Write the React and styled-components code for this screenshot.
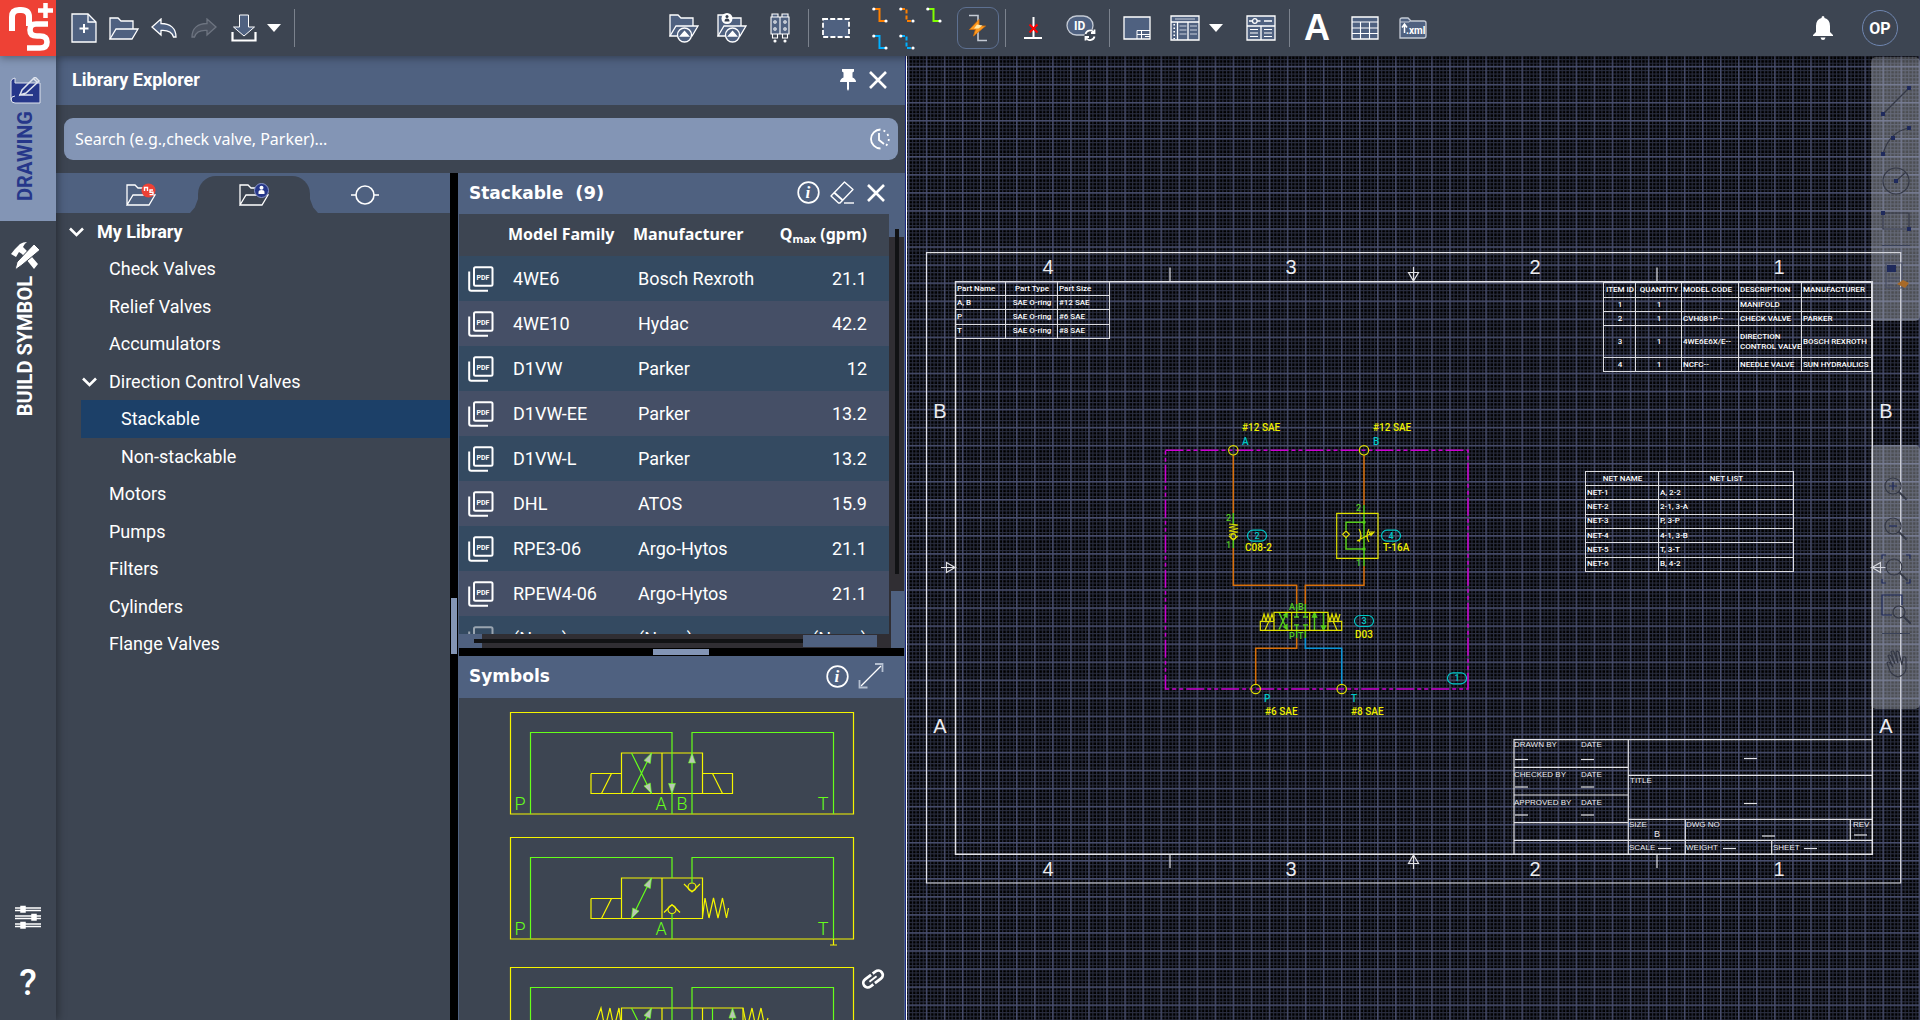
import React from 'react';
import styled, { createGlobalStyle, css } from 'styled-components';

const c = {
  base: '#3d4552',
  head: '#4f6180',
  soft: '#8395b5',
  navy: '#26378a',
  pick: '#1c4068',
  rowA: '#344a61',
  rowB: '#454f66',
  track: '#302e33',
  yellow: '#f5f500',
  green: '#66ff1a',
  cyan: '#00c8c8',
  orange: '#d9700a',
};

const GlobalStyle = createGlobalStyle`
  * { box-sizing: border-box; }
  body { margin: 0; overflow: hidden; background: ${c.base}; color: #fff; font-family: Roboto, "Liberation Sans", sans-serif; font-size: 18px; }
  button, input { font: inherit; color: inherit; }
  svg { display: block; }
`;

const bare = css`
  border: 0;
  padding: 0;
  background: none;
  cursor: pointer;
  display: flex;
  align-items: center;
  justify-content: center;
`;

const Shell = styled.div`
  display: flex;
  flex-direction: column;
  height: 100vh;
`;

/* ---------- top bar ---------- */
const TopBar = styled.header`
  flex: none;
  display: flex;
  height: 56px;
  background: ${c.base};
  position: relative;
  z-index: 3;
  box-shadow: 0 2px 8px rgba(0, 0, 0, 0.35);
`;
const Logo = styled.a`
  display: block;
  width: 56px;
  height: 56px;
  background: #ee4135;
`;
const Groups = styled.div`
  flex: 1;
  display: flex;
  justify-content: space-between;
  align-items: center;
  padding: 0 22px 0 8px;
`;
const Group = styled.div`
  display: flex;
  align-items: center;
`;
const Tool = styled.button`
  ${bare}
  width: ${(p) => p.$w || 48}px;
  height: 42px;
`;
const Caret = styled(Tool)`
  justify-content: ${(p) => (p.$start ? 'flex-start' : 'center')};
`;
const AutoButton = styled.button`
  ${bare}
  width: 42px;
  height: 42px;
  margin-right: 2px;
  border: 1px solid #5d7091;
  border-radius: 9px;
`;
const Separator = styled.span`
  width: 8px;
  height: 38px;
  margin-left: ${(p) => p.$gap || 0}px;
  background: linear-gradient(#7b828d, #7b828d) center / 1px 100% no-repeat;
`;
const Connectors = styled.div`
  display: grid;
  grid-template-columns: repeat(3, 27px);
  grid-auto-rows: 27px;
  align-items: center;
  margin: 0 10px 0 6px;
`;
const LineTool = styled.button`
  ${bare}
  width: 27px;
  height: 27px;
`;
const Avatar = styled.button`
  ${bare}
  width: 36px;
  height: 36px;
  margin-left: 15px;
  border: 1px solid #6f86b0;
  border-radius: 50%;
  font-size: 16px;
  font-weight: 700;
`;

/* ---------- rail ---------- */
const Body = styled.div`
  flex: 1;
  min-height: 0;
  display: flex;
`;
const Rail = styled.nav`
  flex: none;
  width: 56px;
  display: flex;
  flex-direction: column;
  align-items: stretch;
  position: relative;
  z-index: 2;
  background: ${c.base};
  box-shadow: 2px 0 8px rgba(0, 0, 0, 0.35);
`;
const RailTab = styled.button`
  ${bare}
  flex-direction: column;
  justify-content: flex-start;
  gap: 6px;
  padding: 21px 6px 0 0;
  height: ${(p) => (p.$active ? 165 : 200)}px;
  background: ${(p) => (p.$active ? c.soft : 'none')};
  color: ${(p) => (p.$active ? c.navy : '#fff')};
`;
const RailLabel = styled.span`
  writing-mode: vertical-rl;
  transform: rotate(180deg);
  font-size: 20px;
  line-height: 24px;
  font-weight: 700;
`;
const RailFoot = styled.div`
  margin-top: auto;
  display: flex;
  flex-direction: column;
  align-items: center;
  gap: 28px;
  padding-bottom: 18px;
`;
const FootButton = styled.button`
  ${bare}
  width: 40px;
  height: 38px;
  font-size: 36px;
  line-height: 38px;
  font-weight: 500;
`;

/* ---------- library panel ---------- */
const Panel = styled.section`
  flex: 0 0 849px;
  display: flex;
  flex-direction: column;
  min-height: 0;
`;
const PanelHead = styled.header`
  flex: none;
  height: 49px;
  padding: 0 14px 2px 16px;
  display: flex;
  align-items: center;
  gap: 4px;
  background: ${c.head};
`;
const PanelTitle = styled.h1`
  flex: 1;
  margin: 0;
  font-size: 18px;
  line-height: 20px;
  font-weight: 700;
`;
const IconButton = styled.button`
  ${bare}
  width: 26px;
  height: 30px;
`;
const SearchBox = styled.div`
  flex: none;
  display: flex;
  align-items: center;
  height: 42px;
  margin: 13px 7px 13px 8px;
  padding: 0 5px 0 11px;
  border-radius: 9px;
  background: ${c.soft};
`;
const SearchInput = styled.input`
  flex: 1;
  border: 0;
  outline: 0;
  padding: 0;
  background: none;
  font: 16px/24px "Noto Sans", "Open Sans", sans-serif;
  &::placeholder { color: #fff; opacity: 1; }
`;
const Columns = styled.div`
  flex: 1;
  min-height: 0;
  display: flex;
`;
const TreeSide = styled.div`
  flex: 0 0 394px;
  display: flex;
  flex-direction: column;
`;
const Tabs = styled.div`
  flex: none;
  height: 40px;
  display: grid;
  grid-template-columns: 135px 125px 1fr;
  align-items: end;
  background: ${c.head};
`;
const Tab = styled.button`
  ${bare}
  position: relative;
  height: 37px;
  padding: ${(p) => p.$pad || '0'};
  ${(p) => p.$active && css`
    width: 112px;
    margin-left: 7px;
    border-radius: 18px 18px 0 0;
    background: ${c.base};
    &::before, &::after {
      content: '';
      position: absolute;
      bottom: 0;
      width: 8px;
      height: 14px;
      background: ${c.base};
    }
    &::before { right: 100%; clip-path: polygon(100% 0, 100% 100%, 0 100%, 60% 60%); }
    &::after { left: 100%; clip-path: polygon(0 0, 0 100%, 100% 100%, 40% 60%); }
  `}
`;
const Tree = styled.ul`
  margin: 0;
  padding: 0;
  list-style: none;
`;
const TreeItem = styled.li`
  height: 37px;
  padding-left: ${(p) => [12, 25, 25, 25][p.$level]}px;
  &:nth-child(even) { height: 38px; }
`;
const TreeButton = styled.button`
  ${bare}
  justify-content: flex-start;
  width: 100%;
  height: 100%;
  padding-left: ${(p) => [1, 28, 1, 40][p.$level]}px;
  gap: ${(p) => (p.$level ? 12 : 13)}px;
  background: ${(p) => (p.$picked ? c.pick : 'none')};
  line-height: 20px;
  font-weight: ${(p) => (p.$level ? 400 : 700)};
`;
const VSplit = styled.div`
  flex: 0 0 8px;
  display: flex;
  justify-content: center;
  padding-top: 425px;
  background: #000;
  &::after { content: ''; width: 6px; height: 56px; background: ${c.soft}; }
`;
const Detail = styled.div`
  flex: 1;
  min-width: 0;
  display: flex;
  flex-direction: column;
  border: solid ${c.head};
  border-width: 0 1px;
`;
const Results = styled.section`
  flex: 0 0 475px;
  min-height: 0;
  display: flex;
  flex-direction: column;
`;
const SubHead = styled.header`
  flex: none;
  height: ${(p) => p.$h}px;
  padding: 0 ${(p) => p.$pr}px 2px 10px;
  display: flex;
  align-items: center;
  gap: 8px;
  background: ${c.head};
`;
const SubTitle = styled.h2`
  flex: 1;
  margin: 0;
  font: 700 17px/20px "DejaVu Sans", Verdana, sans-serif;
  span { margin-left: 12px; font-size: 18px; }
`;
const ScrollGrid = styled.div`
  flex: 1;
  min-height: 0;
  display: grid;
  grid-template-columns: minmax(0, 1fr) 15px;
  grid-template-rows: minmax(0, 1fr) 14px;
`;
const TableClip = styled.div`
  min-height: 0;
  overflow: hidden;
`;
const DataTable = styled.table`
  width: 100%;
  table-layout: fixed;
  border-collapse: collapse;
`;
const Th = styled.th`
  height: 42px;
  padding: 0 ${(p) => (p.$right ? 22 : 0)}px 2px 0;
  text-align: ${(p) => (p.$right ? 'right' : 'left')};
  font: 700 16px/20px "Noto Sans", "Open Sans", sans-serif;
  white-space: nowrap;
  sub { font-size: 11px; line-height: 0; vertical-align: -3px; }
`;
const Tr = styled.tr`
  height: 45px;
  background: ${c.rowB};
  &:nth-child(odd) { background: ${c.rowA}; }
`;
const Td = styled.td`
  padding: 0 ${(p) => (p.$right ? 22 : 0)}px 0 ${(p) => p.$pl || 5}px;
  text-align: ${(p) => (p.$right ? 'right' : 'left')};
  line-height: 20px;
  white-space: nowrap;
`;
const PdfButton = styled.button`
  ${bare}
  opacity: ${(p) => (p.$dim ? 0.5 : 1)};
`;
const VTrack = styled.div`
  grid-row: 1 / 3;
  grid-column: 2;
  background:
    linear-gradient(#111214, #111214) 6px 15px / 4px 345px no-repeat,
    linear-gradient(${c.head}, ${c.head}) 0 0 / 100% 23px no-repeat,
    linear-gradient(${c.head}, ${c.head}) 2px 100% / 13px 57px no-repeat,
    ${c.track};
`;
const HTrack = styled.div`
  background:
    linear-gradient(#111214, #111214) 15px 5px / 329px 4px no-repeat,
    linear-gradient(${c.head}, ${c.head}) 344px 1px / 74px 12px no-repeat,
    linear-gradient(${c.head}, ${c.head}) 0 0 / 23px 14px no-repeat,
    ${c.track};
`;
const HSplit = styled.div`
  flex: 0 0 8px;
  display: flex;
  align-items: center;
  padding-left: 194px;
  background: #000;
  &::after { content: ''; width: 56px; height: 6px; background: ${c.soft}; }
`;
const SymbolList = styled.div`
  flex: 1;
  min-height: 0;
  overflow: hidden;
  display: flex;
  flex-direction: column;
  gap: 23px;
  padding: 14px 18px 0 51px;
`;
const SymbolCard = styled.div`
  flex: none;
  display: flex;
  align-items: flex-start;
  gap: 6px;
  svg { overflow: visible; }
`;
const LinkButton = styled(IconButton)`
  height: 24px;
`;
const Edge = styled.div`
  flex: 0 0 2px;
  border-left: 1px solid #1d2c86;
  background: #fff;
`;

/* ---------- canvas ---------- */
const Canvas = styled.main`
  flex: 1;
  min-width: 0;
  position: relative;
  overflow: hidden;
  background: #000;
`;
const Drawing = styled.svg`
  width: 100%;
  height: 100%;
`;
const SheetTable = styled.table`
  position: absolute;
  left: ${(p) => p.$x}px;
  top: ${(p) => p.$y}px;
  width: ${(p) => p.$w}px;
  height: ${(p) => p.$h}px;
  table-layout: fixed;
  border-collapse: collapse;
  font-size: 8px;
  line-height: 10px;
  font-weight: 500;
  th, td {
    height: 14px;
    padding: 0 0 0 1px;
    border: 1px solid #dcdce0;
    text-align: left;
    font-weight: inherit;
    white-space: pre;
  }
  .mid { text-align: center; }
`;
const Palette = styled.div`
  position: absolute;
  right: 0;
  top: ${(p) => p.$top}px;
  width: 49px;
  height: 264px;
  padding-top: 24px;
  display: flex;
  flex-direction: column;
  align-items: center;
  border-radius: 5px;
  background: rgba(190, 194, 205, 0.4);
`;
const PaletteButton = styled.button`
  ${bare}
  width: 40px;
  height: 40px;
`;
const PaletteRule = styled.hr`
  width: 28px;
  height: 1px;
  margin: 4px 0 10px;
  border: 0;
  background: #3a4258;
`;

/* ---------- icons ---------- */
const Svg = ({ w, h = w, box, children, ...rest }) => (
  <svg width={w} height={h} viewBox={box || `0 0 ${w} ${h}`} fill="none" stroke="#fff" strokeWidth="1.3" {...rest}>
    {children}
  </svg>
);
const FILL = '#4f6180';

const LogoMark = () => (
  <Svg w={56} strokeWidth="6">
    <path d="M12 31V17q0-7 7-7h2q8 0 8 7v9" strokeLinejoin="round" />
    <path d="M48 24H36q-6 0-6 6t7 6h3q7 0 7 6t-7 6H27" strokeWidth="5.600" />
    <path d="M45.500 3v15M38 10.500h15" strokeWidth="4.500" />
  </Svg>
);
const NewDoc = () => (
  <Svg w={26} h={30}>
    <path d="M1 1h16l8 8v20H1z" fill={FILL} />
    <path d="M17 1v8h8" />
    <path d="M13 11v9M8.500 15.500h9" strokeWidth="2" />
  </Svg>
);
const OpenFolder = () => (
  <Svg w={30} h={23}>
    <path d="M1 22V1h8l3 3h12v8" fill={FILL} />
    <path d="M1 22L7 12h22l-6 10z" fill={FILL} />
  </Svg>
);
const Undo = ({ flip }) => (
  <Svg w={26} h={20} stroke={flip ? '#6d7480' : '#fff'}>
    <g transform={flip ? 'translate(26 0) scale(-1 1)' : undefined}>
      <path d="M1 9L10 1v4.500C19 5.500 25 10 25 19h-2.500C21 14 17 12 10 12.500V17z" fill={flip ? '#4a515e' : FILL} />
    </g>
  </Svg>
);
const Download = () => (
  <Svg w={26} h={28}>
    <path d="M8.500 1h9v12h6L13 22 2.500 13h6z" fill={FILL} strokeWidth="1" />
    <path d="M1.500 18v8.500h23V18" strokeWidth="2.200" />
  </Svg>
);
const Down = () => (
  <Svg w={14} h={8} stroke="none"><path d="M0 0h14L7 8z" fill="#fff" /></Svg>
);
const UploadFolder = ({ user }) => (
  <Svg w={30} h={30}>
    <path d="M1 23V2h8l3 3h12v8" fill={FILL} />
    <path d="M1 23l6-10h22l-6 10z" fill={FILL} />
    <circle cx="15.500" cy="22" r="7" fill={FILL} />
    <path d="M15.500 18.500l4 4.500h-8z" fill="#fff" />
    {user && <g stroke="none"><circle cx="10" cy="5.500" r="5.500" fill="#fff" /><circle cx="10" cy="3.500" r="1.500" fill="#333c4c" /><path d="M7.500 8.500a2.500 3 0 015 0z" fill="#333c4c" /></g>}
  </Svg>
);
const ValveBlock = () => (
  <Svg w={20} h={30} strokeWidth="1.100">
    <path d="M1 4h18v17H1zM10 4v17M2 1h6v3H2zM12 1h6v3h-6z" fill={FILL} />
    {[5, 15].map((x) => (
      <g key={x}>
        <circle cx={x} cy="9" r="1.200" /><circle cx={x} cy="16" r="1.200" />
        <path d={`M${x - 2.5} 21v4h5v-4`} /><circle cx={x} cy="28" r="1" fill="#fff" />
      </g>
    ))}
  </Svg>
);
const Marquee = () => (
  <Svg w={28} h={20}><path d="M1 1h26v18H1z" fill={FILL} strokeWidth="1.800" strokeDasharray="5 2.200" /></Svg>
);
const Connector = ({ color, dash }) => (
  <Svg w={16} h={16} stroke={color} strokeWidth="2">
    <path d="M2 2h5.500v12H14" strokeDasharray={dash ? '4 2' : undefined} />
    <circle cx="1.800" cy="2" r="1.600" fill="#fff" stroke="none" />
    <circle cx="14" cy="14" r="1.600" fill="#fff" stroke="none" />
  </Svg>
);
const Auto = () => (
  <Svg w={20} h={28} stroke="#c4cad4" strokeWidth="1.600">
    <path d="M1 1.500h9v25h9" />
    <path d="M11 5.500L1.500 15.500h6L5.500 22 17.500 12h-6.500z" fill="#ff9a1f" stroke="#d97208" strokeWidth="0.800" />
    <path d="M9 10.500l-3 4h4.500l4-3z" fill="#ffe9a8" stroke="none" />
  </Svg>
);
const CrossTool = () => (
  <Svg w={18} h={22} strokeWidth="2"><path d="M9.500 0v21M0 21h18" /><path d="M5.500 7.500l8 8m0-8l-8 8" stroke="#f00" /></Svg>
);
const IdTool = () => (
  <Svg w={30} h={26}>
    <rect x="1" y="1" width="26" height="19" rx="9.500" fill={FILL} stroke="#c4cad4" />
    <text x="8" y="15" fontSize="12" fontWeight="700" fill="#fff" stroke="none">ID</text>
    <circle cx="24" cy="20" r="5.500" fill={c.base} stroke="none" />
    <path d="M19.500 19a4.600 4.600 0 018-2M28.500 21.500a4.600 4.600 0 01-8 2M28.500 14.500v3.500h-3.500M19.500 25.500V22H23" strokeWidth="1.800" />
  </Svg>
);
const TitleBlockIcon = () => (
  <Svg w={28} h={24}>
    <path d="M1 1h26v22H1z" fill={FILL} />
    <path d="M14 23v-8.500h13M14 18.500h13M18.500 14.500v8.500M22 20.500h5" strokeWidth="1" />
  </Svg>
);
const BomIcon = () => (
  <Svg w={30} h={26}>
    <path d="M1 1h28v24H1z" fill={FILL} />
    <path d="M1 7h28M7.500 7v18M18 7v18" />
    <path d="M5 4h20M9.500 11h7M9.500 15h7M9.500 19h7M20 11h7M20 15h7M20 19h7" strokeWidth="1" stroke="#c9d0dc" />
    <path d="M4.200 9v15" strokeDasharray="1.500 2" strokeWidth="1.600" />
  </Svg>
);
const NetIcon = () => (
  <Svg w={30} h={26}>
    <path d="M1 1h28v24H1z" fill={FILL} />
    <path d="M1 11h28M15 11v14M3 6h3.500M11 6h3.500M18 6h8" />
    <circle cx="8.800" cy="6" r="2.300" />
    <path d="M4 14.500h8M4 18h8M4 21.500h8M18 14.500h8M18 18h8M18 21.500h8" strokeWidth="1.100" />
  </Svg>
);
const LetterA = styled.span`
  font: 700 36px/36px "Liberation Sans", Arial, sans-serif;
`;
const GridIcon = () => (
  <Svg w={28} h={24}><path d="M1 1h26v22H1z" fill={FILL} /><path d="M1 6h26M1 12h26M1 17.500h26M9.500 6v17M18.500 6v17" strokeWidth="1.100" /></Svg>
);
const XmlIcon = () => (
  <Svg w={28} h={22}>
    <path d="M1 21V3q0-2 2-2h6l3 3h13q2 0 2 2v13q0 2-2 2z" fill={FILL} stroke="#c4cad4" />
    <path d="M1 5h9l2-1.500" stroke="#c4cad4" strokeWidth="1" />
    <path d="M5.500 16V8M3 10.500L5.500 7l2.500 3.500" strokeWidth="1.500" />
    <text x="7" y="17" fontSize="10" fontWeight="700" fill="#fff" stroke="none">.xml</text>
  </Svg>
);
const Bell = () => (
  <Svg w={20} h={24} stroke="none"><path fill="#fff" d="M10 0q1.500 0 1.500 2Q17 3.500 17 10v6l3 3v1H0v-1l3-3v-6q0-6.500 5.500-8Q8.500 0 10 0zM7.500 21.500h5Q12 24 10 24t-2.500-2.500z" /></Svg>
);
const DrawIcon = () => (
  <Svg w={31} h={28} stroke="#dfe4ee" strokeWidth="1">
    <path d="M5 6h25v20H5q-4 0-4-4V4q0-2 4-3z" fill={c.navy} />
    <path d="M1 23q0-4 4-4" /><path d="M10 18l2-5L25 0l4 4-13 12zM24 2l3 3M9 18h14" strokeWidth="1.500" />
  </Svg>
);
const BuildIcon = () => (
  <Svg w={28} h={28} stroke="none" fill="#fff">
    <path d="M0 12l4-5 5-5q3-2 7-2-3 2-4 5l3 3 12 14-4 5L11 12 8 10l-3 5z" />
    <path d="M23 2l6 6-18 15-7 5 2-8z" stroke={c.base} strokeWidth="1" />
  </Svg>
);
const SlidersIcon = () => (
  <Svg w={26} h={24} strokeWidth="1.500">
    <path d="M0 3h26M0 5.500h26M0 11h26M0 13.500h26M0 19h26M0 21.500h26" />
    <path d="M6 1.500h4v5.500H6zM17 9.500h4v5.500h-4zM6 17.500h4v5.500H6z" fill="#fff" />
  </Svg>
);
const Pin = () => (
  <Svg w={16} h={22} stroke="none"><path fill="#fff" d="M2 0h12v2.500l-1.500 1v5Q16 10 16 13H9v7l-1 2-1-2v-7H0q0-3 3.500-4.500v-5L2 2.500z" /></Svg>
);
const Close = () => (<Svg w={18} strokeWidth="2.600"><path d="M1 1l16 16M17 1L1 17" /></Svg>);
const History = () => (
  <Svg w={22} strokeWidth="1.800">
    <path d="M11.500 1.500A9.500 9.500 0 1011.500 20.500" /><path d="M10 5v7l5 4" />
    <path d="M14.500 2.500A9.500 9.500 0 0114.500 19.500" strokeDasharray="2 3.200" />
  </Svg>
);
const Info = () => (
  <Svg w={23} strokeWidth="1.700"><circle cx="11.500" cy="11.500" r="10.300" />
    <text x="8.500" y="17" fontFamily="Liberation Serif" fontStyle="italic" fontWeight="700" fontSize="17" fill="#fff" stroke="none">i</text></Svg>
);
const Eraser = () => (
  <Svg w={24} h={23} strokeWidth="1.400"><path d="M14.500 1L23 8.500 10 22H8.500L1 15z" strokeLinejoin="round" /><path d="M4 11.500l9 8" strokeWidth="1.800" /><path d="M14 22h10" /></Svg>
);
const Expand = () => (
  <Svg w={26} strokeWidth="1.300"><path d="M3 23L23 3" /><path d="M17 1h7.500v8M1.500 17v7.500h8" stroke="#b4bfd0" strokeWidth="1.800" /></Svg>
);
const Link = () => (
  <Svg w={24} h={24} strokeWidth="2">
    <g transform="rotate(-37 12 12)">
      <path d="M13 7.500H5.500a4.500 4.500 0 000 9H9M11 16.500h7.500a4.500 4.500 0 000-9H15" strokeWidth="2.800" />
      <path d="M7.500 12h9" />
    </g>
  </Svg>
);
const Pdf = () => (
  <Svg w={26} h={26} strokeWidth="2">
    <rect x="6" y="1.200" width="18.500" height="18.500" rx="1.500" />
    <path d="M1.200 5.500v17.300q0 2 2 2H20" />
    <text x="8.500" y="13.500" fontSize="7" fontWeight="700" fill="#fff" stroke="none">PDF</text>
  </Svg>
);
const Chevron = () => (<Svg w={15} h={10} strokeWidth="2.600"><path d="M1 1.500l6.500 6.500L14 1.500" /></Svg>);
const TabFolder = ({ kind }) => (
  <Svg w={30} h={23}>
    <path d="M1 22V2h8l3 3h12v6M1 22L7 12h22l-6 10z" />
    <circle cx="22.500" cy="7.500" r="7" fill={kind === 'ns' ? '#ee4135' : c.navy} stroke={kind === 'ns' ? 'none' : '#8c97c8'} strokeWidth="1" />
    {kind === 'ns'
      ? <path d="M18.500 8V4.500h3V8M27 7h-3v2.300h3v2.300h-3.500" strokeWidth="1.400" />
      : <g stroke="none" fill="#fff"><circle cx="22.500" cy="4.800" r="2" /><path d="M19.500 11V9q0-2 3-2t3 2v2z" /></g>}
  </Svg>
);
const NodeIcon = () => (<Svg w={28} h={20} strokeWidth="1.600"><circle cx="14" cy="10" r="9" /><path d="M0 10h5M23 10h5" /></Svg>);

/* ---------- hydraulic symbols ---------- */
const Head = ({ x, y, r = 0 }) => (
  <path d="M0 0l3.500 10h-7z" transform={`translate(${x} ${y}) rotate(${r})`} fill="#b9c7b4" stroke="#66ff1a" strokeWidth="0.600" />
);
const SymLabel = styled.text`
  fill: ${c.green};
  stroke: none;
  font-size: 18px;
  font-weight: 300;
  text-anchor: middle;
`;
const Frame = ({ h = 102, children }) => (
  <Svg w={344} h={h} stroke={c.yellow} strokeWidth="1.200">
    <path d="M0.500 0.500h343v101.500H0.500z" />
    {children}
  </Svg>
);
const SymbolOne = () => (
  <Frame>
    <path d="M111.500 41h81v40.500h-81zM152 41v40.500M81 61.500h30.500M81 61.500v20h30.500M91.500 81.500l10-20M192.500 61.500h30v20h-30M202.500 61.500l10 20" />
    <g stroke={c.green}>
      <path d="M20.500 102V20.500H162V102M182 102V20.500h141.500V102M121.500 41l20 40.500M121.500 81.500l20-40.500" />
    </g>
    <Head x={141.5} y={41} r={26} /><Head x={141.5} y={81.5} r={154} />
    <Head x={162} y={81.5} r={180} /><Head x={182} y={41} />
    <SymLabel x="10" y="98">P</SymLabel><SymLabel x="151" y="98">A</SymLabel>
    <SymLabel x="172" y="98">B</SymLabel><SymLabel x="313" y="98">T</SymLabel>
  </Frame>
);
const SymbolTwo = () => (
  <Frame h={107}>
    <path d="M111.500 41h81v40.500h-81zM152 41v40.500M81 61.500h30.500M81 61.500v20h30.500M91.500 81.500l10-20" />
    <path d="M192.500 80l2.500-19 4 20 4.500-20 4.500 20 4.500-20 4 20 2-10" />
    <circle cx="182" cy="50" r="4" /><path d="M174 47l8 8 8-8" />
    <circle cx="162" cy="72.500" r="4" /><path d="M154 75.500l8-8 8 8" />
    <path d="M323.500 102v6M320 108h7" />
    <g stroke={c.green}>
      <path d="M20.500 102V20.500H162V41M182 46V20.500h141.500V102M162 102V76.500M121.500 81.500l20-40.500" />
    </g>
    <Head x={141.5} y={41} r={26} /><Head x={121.5} y={81.5} r={206} />
    <SymLabel x="10" y="98">P</SymLabel><SymLabel x="151" y="98">A</SymLabel><SymLabel x="313" y="98">T</SymLabel>
  </Frame>
);
const SymbolThree = () => (
  <Frame>
    <path d="M111.500 41h121.500v40.500H111.500zM152 41v40.500M192.500 41v40.500" />
    <path d="M86 55l5-14 4 20 5-20 4 20 5-20 2.500 20M233 41l4 20 5-20 4 20 5-20 4 20 3-10" />
    <g stroke={c.green}>
      <path d="M20.500 102V20.500H162V55M182 55V20.500h141.500V102M121.500 41l20 40.500M121.500 81.500l20-40.500M202.500 41v40M222.500 41v40" />
    </g>
    <Head x={141.5} y={41} r={26} /><Head x={222.5} y={41} />
  </Frame>
);

/* ---------- schematic ---------- */
const Mark = styled.text`
  stroke: none;
  fill: ${(p) => p.$c || '#ececf0'};
  font-family: ${(p) => (p.$arial ? '"Liberation Sans", Arial, sans-serif' : 'Roboto, sans-serif')};
  font-size: ${(p) => p.$s || 10}px;
  font-weight: ${(p) => p.$b || 500};
  text-anchor: ${(p) => (p.$mid ? 'middle' : 'start')};
`;
const Tag = ({ x, y, n }) => (
  <g stroke={c.cyan}>
    <rect x={x - 9.5} y={y - 5.5} width="19" height="11" rx="5.500" />
    <Mark x={x} y={y + 3} $c={c.cyan} $s={9} $mid>{n}</Mark>
  </g>
);
const columns = [['4', 1049], ['3', 1292], ['2', 1536], ['1', 1780]];
const blockText = [
  ['DRAWN BY', 1515, 747], ['DATE', 1582, 747], ['CHECKED BY', 1515, 777], ['DATE', 1582, 777],
  ['APPROVED BY', 1515, 805], ['DATE', 1582, 805], ['TITLE', 1631, 783], ['SIZE', 1630, 827],
  ['DWG NO', 1687, 827], ['REV', 1854, 827], ['SCALE', 1630, 850], ['WEIGHT', 1687, 850], ['SHEET', 1774, 850],
];
const dashes = [
  [1516, 759.5], [1582, 759.5], [1516, 787], [1582, 787], [1516, 815], [1582, 815], [1745, 758.5],
  [1745, 803.5], [1763, 836], [1855, 835], [1659, 848.5], [1724, 848.5], [1805, 848.5],
];
const yellowLabels = [
  ['#12 SAE', 1243, 431], ['#12 SAE', 1374, 431], ['C08-2', 1246, 551], ['T-16A', 1384, 551],
  ['D03', 1356, 638], ['#6 SAE', 1266, 715], ['#8 SAE', 1352, 715],
];
const portLabels = [['A', 1243, 445], ['B', 1374, 445], ['P', 1265, 702], ['T', 1352, 702]];
const pinLabels = [
  ['2', 1227, 521], ['1', 1227, 548], ['2', 1357, 511], ['1', 1357, 566],
  ['A', 1290, 610], ['B', 1299, 610], ['P', 1290, 639], ['T', 1299, 639],
];

const Schematic = () => (
  <Drawing fill="none" strokeWidth="1.200">
    <defs>
      <pattern id="minor" x="19.300" y="10.300" width="3.610" height="3.610" patternUnits="userSpaceOnUse">
        <path d="M0 0.600h3.610M0.600 0v3.610" stroke="#2a2e40" strokeWidth="1.100" />
      </pattern>
      <pattern id="major" x="18.800" y="9.800" width="18.050" height="18.050" patternUnits="userSpaceOnUse">
        <path d="M0 0.700h18.050M0.700 0v18.050" stroke="#484e6e" strokeWidth="1.300" />
      </pattern>
    </defs>
    <rect width="100%" height="100%" fill="url(#minor)" />
    <rect width="100%" height="100%" fill="url(#major)" />
    <g transform="translate(-908 -56)">
      <g stroke="#e2e2e6">
        <path d="M927.500 252.700H1901.700V883H927.500z" />
        <path d="M956.500 281.700H1873.300V854.300H956.500z" strokeWidth="1.500" />
        <path d="M1171 267.500v14M1658 267.500v14M1171 854v14M1658 854v14" />
        <path d="M1414.500 267v14l-5-8.500h10l-5 8.500M1414.500 869v-14l-5 8.500h10l-5-8.500M942 567.500h14l-8.500-5v10l8.500-5M1887 567.500h-14l8.500-5v10l-8.500-5" />
        <path d="M1515 854V739.700H1873M1629.300 739.700V854M1515 767.300h114M1515 795h114M1515 822.700h114M1515 840.300h358M1629 775.300h244M1629 819.300h244M1686.300 819.300V854M1851.300 819.300v21M1772.700 840.300V854" />
        {dashes.map(([x, y]) => <path key={`${x}-${y}`} d={`M${x} ${y}h13`} />)}
      </g>
      {columns.map(([t, x]) => (
        <g key={t}>
          <Mark $arial $s={20} $mid x={x} y="274">{t}</Mark>
          <Mark $arial $s={20} $mid x={x} y="876">{t}</Mark>
        </g>
      ))}
      {[941, 1887].map((x) => (
        <g key={x}>
          <Mark $arial $s={20} $mid x={x} y="418">B</Mark>
          <Mark $arial $s={20} $mid x={x} y="733">A</Mark>
        </g>
      ))}
      {blockText.map(([t, x, y]) => <Mark key={`${t}${y}`} $arial $s={8} x={x} y={y}>{t}</Mark>)}
      <Mark $arial $s={9} x="1655" y="837">B</Mark>

      <path d="M1166.500 450.300H1469V689H1166.500z" stroke="#cc00d4" strokeWidth="1.500" strokeDasharray="18 3 4 3 4 3" />
      <g stroke={c.orange} strokeWidth="1.500">
        <path d="M1234.300 455v58M1234.300 548v37.300h63.400V604M1365 455v50M1365 566v19.300h-58.700V604M1297.700 638v10.300h-41V684" />
        <path d="M1306.300 638v10.300h36.400V684" stroke="#0a94d8" />
      </g>
      <g stroke="#55cc1a" strokeWidth="1.500">
        <path d="M1234.300 513v12M1234.300 540v8M1365 505v61M1365 522.300h-18v8M1347 538v11h18" />
        <path d="M1297.700 604v13M1306.300 604v13M1295 617h5M1304 617h5M1297.700 638v-13M1306.300 638v-13M1295 625h5M1304 625h5M1280 612.500l8 17M1280 629.500l8-17M1315.500 630v-17M1324.500 612v17" />
        <path d="M1313.500 617l2-4 2 4zM1322.500 626l2 4 2-4zM1285 615l3-2v4zM1285 627l3 2v-4z" fill="#55cc1a" />
        <circle cx="1365" cy="522.300" r="1" fill="#6f2" /><circle cx="1365" cy="549" r="1" fill="#6f2" />
      </g>
      <g stroke="#e0e000">
        <circle cx="1234.300" cy="450.300" r="4.700" /><circle cx="1365" cy="450.300" r="4.700" />
        <circle cx="1256.700" cy="689" r="4.700" /><circle cx="1342.700" cy="689" r="4.700" />
        <path d="M1230 524l9 1-9 2.500 9 1-9 2.500 9 1-9 2.500M1230 536l4.300 4 4.500-4" />
        <circle cx="1234.300" cy="536.500" r="2.500" />
        <path d="M1337.700 513.300H1379v45h-41.300z" />
        <path d="M1347 531l3.300 3.300-3.300 3.300-3.300-3.300zM1360 529q4 6.500 0 13M1370 529q-4 6.500 0 13M1358 541l15-8M1375 532l-5 0 2 3.500z" />
        <path d="M1275 612.300h54v18h-54zM1292.700 612v18M1310.700 612v18M1275 621.300h-13.700v9H1275M1266 630l4-9M1329 621.300h13.700v9H1329M1334 621l4 9" />
        <path d="M1263 621l2-7 2 7 2-7 2 7 2-7 2 7M1329 614l2 7 2-7 2 7 2-7 2 7 2-7" />
      </g>
      {yellowLabels.map(([t, x, y]) => <Mark key={t + x} x={x} y={y} $c="#f0f000">{t}</Mark>)}
      {portLabels.map(([t, x, y]) => <Mark key={t} x={x} y={y} $c={c.cyan}>{t}</Mark>)}
      {pinLabels.map(([t, x, y]) => <Mark key={t + x + y} x={x} y={y} $s={9} $c="#5c2">{t}</Mark>)}
      <Tag x={1258} y={535.7} n="2" /><Tag x={1392} y={535.7} n="4" />
      <Tag x={1365} y={621} n="3" /><Tag x={1458} y={678.3} n="1" />
    </g>
  </Drawing>
);

const ports = [['A, B', '#12 SAE'], ['P', '#6 SAE'], ['T', '#8 SAE']];
const bom = [
  ['1', '', 'MANIFOLD', '', 14],
  ['2', 'CVH081P--', 'CHECK VALVE', 'PARKER', 14],
  ['3', '4WE6E6X/E--', 'DIRECTION\nCONTROL VALVE', 'BOSCH REXROTH', 32],
  ['4', 'NCFC--', 'NEEDLE VALVE', 'SUN HYDRAULICS', 14],
];
const nets = [['NET-1', 'A, 2-2'], ['NET-2', '2-1, 3-A'], ['NET-3', 'P, 3-P'], ['NET-4', '4-1, 3-B'], ['NET-5', 'T, 3-T'], ['NET-6', 'B, 4-2']];

const SheetTables = () => (
  <>
    <SheetTable $x={48} $y={225} $w={154} $h={58}>
      <colgroup><col width="50" /><col width="52" /><col width="52" /></colgroup>
      <thead><tr><th>Part Name</th><th className="mid">Part Type</th><th>Part Size</th></tr></thead>
      <tbody>{ports.map(([a, b]) => <tr key={a}><td>{a}</td><td className="mid">SAE O-ring</td><td>{b}</td></tr>)}</tbody>
    </SheetTable>
    <SheetTable $x={696} $y={226} $w={268} $h={90}>
      <colgroup><col width="32" /><col width="46" /><col width="57" /><col width="63" /><col width="70" /></colgroup>
      <thead><tr height="15"><th className="mid">ITEM ID</th><th className="mid">QUANTITY</th><th>MODEL CODE</th><th>DESCRIPTION</th><th>MANUFACTURER</th></tr></thead>
      <tbody>{bom.map(([id, code, text, maker, h]) => (
        <tr key={id} height={h}><td className="mid">{id}</td><td className="mid">1</td><td>{code}</td><td>{text}</td><td>{maker}</td></tr>
      ))}</tbody>
    </SheetTable>
    <SheetTable $x={678} $y={415} $w={209} $h={101}>
      <colgroup><col width="73" /><col /></colgroup>
      <thead><tr><th className="mid">NET NAME</th><th className="mid">NET LIST</th></tr></thead>
      <tbody>{nets.map(([a, b]) => <tr key={a}><td>{a}</td><td>{b}</td></tr>)}</tbody>
    </SheetTable>
  </>
);

const Dot = ({ x, y }) => <rect x={x - 2} y={y - 2} width="4" height="4" fill="#1f2a5c" stroke="none" />;
const Pal = (p) => <Svg w={30} stroke="#343846" strokeWidth="1.200" {...p} />;
const Lens = ({ x = 12, y = 12, r = 8 }) => (
  <><circle cx={x} cy={y} r={r} /><path d={`M${x + r * 0.7} ${y + r * 0.7}l8 8`} strokeWidth="2" /></>
);

const models = [
  ['4WE6', 'Bosch Rexroth', '21.1'], ['4WE10', 'Hydac', '42.2'], ['D1VW', 'Parker', '12'], ['D1VW-EE', 'Parker', '13.2'],
  ['D1VW-L', 'Parker', '13.2'], ['DHL', 'ATOS', '15.9'], ['RPE3-06', 'Argo-Hytos', '21.1'], ['RPEW4-06', 'Argo-Hytos', '21.1'],
  ['(None)', '(None)', '(None)'],
];
const tree = [
  ['My Library', 0], ['Check Valves', 1], ['Relief Valves', 1], ['Accumulators', 1], ['Direction Control Valves', 2],
  ['Stackable', 3], ['Non-stackable', 3], ['Motors', 1], ['Pumps', 1], ['Filters', 1], ['Cylinders', 1], ['Flange Valves', 1],
];

export default function App() {
  return (
    <Shell>
      <GlobalStyle />
      <TopBar>
        <Logo href="#" aria-label="Home"><LogoMark /></Logo>
        <Groups>
          <Group>
            <Tool $w={40} aria-label="New"><NewDoc /></Tool>
            <Tool $w={40} aria-label="Open"><OpenFolder /></Tool>
            <Tool $w={40} aria-label="Undo"><Undo /></Tool>
            <Tool $w={40} aria-label="Redo"><Undo flip /></Tool>
            <Tool $w={40} aria-label="Download"><Download /></Tool>
            <Caret $w={20} aria-label="Download options"><Down /></Caret>
            <Separator $gap={6} />
          </Group>
          <Group>
            <Tool aria-label="Load symbol"><UploadFolder /></Tool>
            <Tool aria-label="Load user symbol"><UploadFolder user /></Tool>
            <Tool aria-label="Manifold"><ValveBlock /></Tool>
            <Separator />
            <Tool aria-label="Boundary"><Marquee /></Tool>
            <Connectors>
              <LineTool aria-label="Pressure line"><Connector color="#ff8000" /></LineTool>
              <LineTool aria-label="Pilot line"><Connector color="#ff8000" dash /></LineTool>
              <LineTool aria-label="Work line"><Connector color="#80ff00" /></LineTool>
              <LineTool aria-label="Tank line"><Connector color="#00b0ff" /></LineTool>
              <LineTool aria-label="Drain line"><Connector color="#00b0ff" dash /></LineTool>
            </Connectors>
            <AutoButton aria-label="Auto connect"><Auto /></AutoButton>
            <Separator />
            <Tool aria-label="Plug"><CrossTool /></Tool>
            <Tool aria-label="Renumber"><IdTool /></Tool>
            <Separator />
            <Tool aria-label="Title block"><TitleBlockIcon /></Tool>
            <Tool aria-label="Bill of materials"><BomIcon /></Tool>
            <Caret $w={28} $start aria-label="Table options"><Down /></Caret>
            <Tool aria-label="Net list"><NetIcon /></Tool>
            <Separator />
            <Tool aria-label="Text"><LetterA>A</LetterA></Tool>
            <Tool aria-label="Table"><GridIcon /></Tool>
            <Tool aria-label="Export XML"><XmlIcon /></Tool>
          </Group>
          <Group>
            <Tool aria-label="Notifications"><Bell /></Tool>
            <Avatar>OP</Avatar>
          </Group>
        </Groups>
      </TopBar>

      <Body>
        <Rail>
          <RailTab $active><DrawIcon /><RailLabel>DRAWING</RailLabel></RailTab>
          <RailTab><BuildIcon /><RailLabel>BUILD SYMBOL</RailLabel></RailTab>
          <RailFoot>
            <FootButton aria-label="Settings"><SlidersIcon /></FootButton>
            <FootButton aria-label="Help">?</FootButton>
          </RailFoot>
        </Rail>

        <Panel>
          <PanelHead>
            <PanelTitle>Library Explorer</PanelTitle>
            <IconButton aria-label="Pin"><Pin /></IconButton>
            <IconButton aria-label="Close"><Close /></IconButton>
          </PanelHead>
          <SearchBox>
            <SearchInput aria-label="Search" placeholder="Search (e.g.,check valve, Parker)..." />
            <IconButton aria-label="History"><History /></IconButton>
          </SearchBox>
          <Columns>
            <TreeSide>
              <Tabs>
                <Tab $pad="0 0 0 34px" aria-label="Vendor library"><TabFolder kind="ns" /></Tab>
                <Tab $active aria-label="My library"><TabFolder /></Tab>
                <Tab $pad="0 36px 0 0" aria-label="Ports"><NodeIcon /></Tab>
              </Tabs>
              <Tree>
                {tree.map(([name, level]) => (
                  <TreeItem key={name} $level={level}>
                    <TreeButton $level={level} $picked={name === 'Stackable'}>
                      {(level === 0 || level === 2) && <Chevron />}{name}
                    </TreeButton>
                  </TreeItem>
                ))}
              </Tree>
            </TreeSide>
            <VSplit />
            <Detail>
              <Results>
                <SubHead $h={41} $pr={15}>
                  <SubTitle>Stackable<span>(9)</span></SubTitle>
                  <IconButton aria-label="Info"><Info /></IconButton>
                  <IconButton aria-label="Clear"><Eraser /></IconButton>
                  <IconButton aria-label="Close results"><Close /></IconButton>
                </SubHead>
                <ScrollGrid>
                  <TableClip>
                    <DataTable>
                      <colgroup><col width="49" /><col width="125" /><col width="140" /><col /></colgroup>
                      <thead><tr><Th aria-label="Datasheet" /><Th>Model Family</Th><Th>Manufacturer</Th><Th $right>Q<sub>max</sub> (gpm)</Th></tr></thead>
                      <tbody>
                        {models.map(([m, f, q]) => (
                          <Tr key={m}>
                            <Td $pl={9}><PdfButton $dim={m === '(None)'} aria-label={`Datasheet ${m}`}><Pdf /></PdfButton></Td>
                            <Td>{m}</Td><Td>{f}</Td><Td $right>{q}</Td>
                          </Tr>
                        ))}
                      </tbody>
                    </DataTable>
                  </TableClip>
                  <VTrack />
                  <HTrack />
                </ScrollGrid>
              </Results>
              <HSplit />
              <SubHead $h={42} $pr={20}>
                <SubTitle>Symbols</SubTitle>
                <IconButton aria-label="Symbols info"><Info /></IconButton>
                <IconButton aria-label="Expand"><Expand /></IconButton>
              </SubHead>
              <SymbolList>
                <SymbolCard><SymbolOne /></SymbolCard>
                <SymbolCard><SymbolTwo /></SymbolCard>
                <SymbolCard><SymbolThree /><LinkButton aria-label="Copy link"><Link /></LinkButton></SymbolCard>
              </SymbolList>
            </Detail>
          </Columns>
        </Panel>
        <Edge />

        <Canvas>
          <Palette $top={1}>
            <PaletteButton aria-label="Line"><Pal><path d="M2 28L28 2" /><Dot x={2} y={28} /><Dot x={28} y={2} /></Pal></PaletteButton>
            <PaletteButton aria-label="Arc"><Pal><path d="M2 28Q8 6 28 2" /><Dot x={2} y={28} /><Dot x={12} y={12} /><Dot x={28} y={2} /></Pal></PaletteButton>
            <PaletteButton aria-label="Circle"><Pal><circle cx="15" cy="15" r="13" /><path d="M15 15l9-8" /><Dot x={15} y={15} /></Pal></PaletteButton>
            <PaletteButton aria-label="Rectangle"><Pal><path d="M2 7h26v16H2z" /><Dot x={2} y={7} /><Dot x={28} y={23} /></Pal></PaletteButton>
            <PaletteRule />
            <PaletteButton aria-label="Format">
              <Pal><path d="M5 2h16v25H5zM7 17h12M7 20h7M7 24h5" stroke="#4a5068" /><path d="M6 4h9v7H6z" fill="#1f2a5c" stroke="none" /><path d="M16 23l6-4 6 3-4 5z" fill="#a86a28" stroke="none" /></Pal>
            </PaletteButton>
          </Palette>
          <Palette $top={389}>
            <PaletteButton aria-label="Zoom in"><Pal><Lens /><path d="M12 8v8M8 12h8" stroke="#1f2a5c" /></Pal></PaletteButton>
            <PaletteButton aria-label="Zoom out"><Pal><Lens /><path d="M8 12h8" stroke="#1f2a5c" /></Pal></PaletteButton>
            <PaletteButton aria-label="Zoom to fit"><Pal><Lens x={13} y={13} /><path d="M1 5V1h4M25 1h4v4M29 25v4h-4M5 29H1v-4" stroke="#1f2a5c" /></Pal></PaletteButton>
            <PaletteButton aria-label="Zoom window"><Pal><path d="M11 21H1V1h20v10" stroke="#1f2a5c" /><Lens x={18} y={18} r={6} /></Pal></PaletteButton>
            <PaletteRule />
            <PaletteButton aria-label="Pan"><Pal><path d="M17 28q-6-2-8-6L6 14q1-2 3 0l3 4L7 7q1-2 3 0l4 8L10 3q2-2 3 0l4 11-2-11q2-2 3 1l3 12 1-8q3-1 3 2v10q-1 6-8 8z" /></Pal></PaletteButton>
          </Palette>
          <Schematic />
          <SheetTables />
        </Canvas>
      </Body>
    </Shell>
  );
}
